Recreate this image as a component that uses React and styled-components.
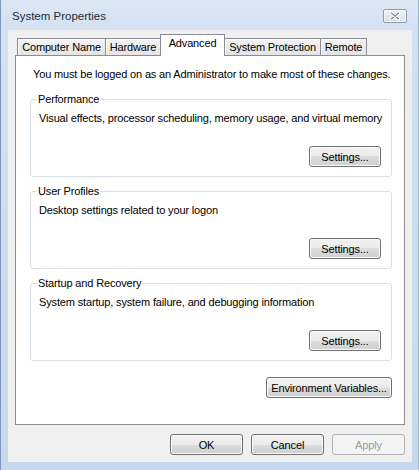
import styled, { createGlobalStyle } from "styled-components"

const GlobalStyle = createGlobalStyle`
  html, body {
    margin: 0;
    padding: 0;
    background: #ffffff;
  }
  body {
    font-family: "Liberation Sans", Arial, sans-serif;
    font-size: 11px;
    letter-spacing: -0.15px;
    color: #000;
  }
`;

const tabs = [
  { label: "Computer Name", w: 89 },
  { label: "Hardware", w: 56 },
  { label: "Advanced", w: 65, active: true },
  { label: "System Protection", w: 97 },
  { label: "Remote", w: 47 },
]

const groups = [
  { title: "Performance", text: "Visual effects, processor scheduling, memory usage, and virtual memory" },
  { title: "User Profiles", text: "Desktop settings related to your logon" },
  { title: "Startup and Recovery", text: "System startup, system failure, and debugging information" },
]

const CloseIcon = () => (
  <svg width="10" height="8" viewBox="0 0 10 8">
    <path d="M1 1 L9 7 M9 1 L1 7" stroke="#ffffff" strokeWidth="3" strokeLinecap="round" />
    <path d="M1.5 1.2 L8.5 6.8 M8.5 1.2 L1.5 6.8" stroke="#7d8794" strokeWidth="1.4" strokeLinecap="round" />
  </svg>
)

const App = () => {
  return (
    <>
      <GlobalStyle />
      <Window>
        <TitleBar>
          <Title>System Properties</Title>
          <CloseButton><CloseIcon /></CloseButton>
        </TitleBar>
        <Client>
          <TabStrip>
            {tabs.map((t) => (
              <Tab key={t.label} $w={t.w} $active={t.active}>{t.label}</Tab>
            ))}
          </TabStrip>
          <Panel>
            <Intro>You must be logged on as an Administrator to make most of these changes.</Intro>
            {groups.map((g, i) => (
              <Group key={g.title} $first={i === 0}>
                <legend>{g.title}</legend>
                <Desc>{g.text}</Desc>
                <ButtonRow $top={20}>
                  <Button $w={72}>Settings...</Button>
                </ButtonRow>
              </Group>
            ))}
            <ButtonRow $top={16}>
              <Button $w={126}>Environment Variables...</Button>
            </ButtonRow>
          </Panel>
          <Footer>
            <Button $w={73}>OK</Button>
            <Button $w={73}>Cancel</Button>
            <Button $w={73} disabled>Apply</Button>
          </Footer>
        </Client>
      </Window>
    </>
  )
}

const Window = styled.div`
  width: 419px;
  height: 470px;
  box-sizing: border-box;
  padding: 0 7px 8px 8px;
  display: flex;
  flex-direction: column;
  background: linear-gradient(to bottom, #dce7f4 0px, #d3e1f2 30px, #c6d8ee 100%);
  box-shadow: inset 1px 0 0 #7f97b8, inset -1px 0 0 #9fb4cf;
`;

const TitleBar = styled.div`
  height: 30px;
  display: flex;
  align-items: flex-start;
  justify-content: space-between;
  padding: 9px 5px 0 4px;
  box-sizing: border-box;
`;

const Title = styled.div`
  font-size: 11.5px;
  line-height: 15px;
  color: #1e2a3a;
  letter-spacing: 0;
`;

const CloseButton = styled.div`
  width: 24px;
  height: 14px;
  box-sizing: border-box;
  border: 1px solid #8c9bb0;
  border-radius: 2px;
  background: linear-gradient(to bottom, #eef2f7, #d9e1ea);
  box-shadow: inset 0 0 0 1px rgba(255, 255, 255, 0.7);
  display: flex;
  align-items: center;
  justify-content: center;
`;

const Client = styled.div`
  flex: 1;
  display: flex;
  flex-direction: column;
  background: #f0f0f0;
  padding-top: 4px;
`;

const TabStrip = styled.div`
  display: flex;
  align-items: flex-end;
  padding-left: 9px;
  height: 21px;
`;

const Tab = styled.div`
  width: ${(p) => p.$w}px;
  height: ${(p) => (p.$active ? 22 : 17)}px;
  margin-right: -1px;
  margin-bottom: ${(p) => (p.$active ? -1 : 0)}px;
  box-sizing: border-box;
  border: 1px solid #898c95;
  border-bottom: none;
  background: ${(p) => (p.$active ? "#ffffff" : "linear-gradient(to bottom, #f4f4f4, #e4e4e4)")};
  box-shadow: ${(p) => (p.$active ? "none" : "inset 1px 1px 0 #fcfcfc")};
  position: relative;
  z-index: ${(p) => (p.$active ? 2 : 1)};
  text-align: center;
  line-height: 15px;
  padding-top: 1px;
  white-space: nowrap;
`;

const Panel = styled.div`
  width: 390px;
  height: 370px;
  margin-left: 7px;
  box-sizing: border-box;
  border: 1px solid #898c95;
  background: #ffffff;
  padding: 11px 12px 0 14px;
  display: flex;
  flex-direction: column;
`;

const Intro = styled.div`
  margin-left: 3px;
  line-height: 15px;
  white-space: nowrap;
`;

const Group = styled.fieldset`
  margin: ${(p) => (p.$first ? 10 : 7)}px 0 0;
  padding: 4px 10px 9px 7px;
  min-inline-size: auto;
  border: 1px solid #d5dfe5;
  border-radius: 3px;
  box-shadow: inset 1px 1px 0 #ffffff;

  legend {
    padding: 0 1px;
    margin-left: -1px;
    line-height: 15px;
  }
`;

const Desc = styled.div`
  line-height: 15px;
  margin-left: 1px;
  white-space: nowrap;
`;

const ButtonRow = styled.div`
  display: flex;
  justify-content: flex-end;
  margin-top: ${(p) => p.$top}px;
`;

const Button = styled.button`
  width: ${(p) => p.$w}px;
  height: 21px;
  box-sizing: border-box;
  padding: 0;
  font-family: inherit;
  font-size: 11px;
  letter-spacing: inherit;
  color: #000;
  white-space: nowrap;
  border: 1px solid #707070;
  border-radius: 3px;
  background: linear-gradient(to bottom, #f2f2f2 0%, #ebebeb 50%, #dddddd 50%, #cfcfcf 100%);
  box-shadow: inset 0 0 0 1px #fbfbfb;

  &:disabled {
    color: #9a9a9a;
    border-color: #adb2b5;
    background: #f4f4f4;
    box-shadow: none;
  }
`;

const Footer = styled.div`
  display: flex;
  justify-content: flex-end;
  gap: 8px;
  padding: 9px 7px 0 0;
`;

export default App
